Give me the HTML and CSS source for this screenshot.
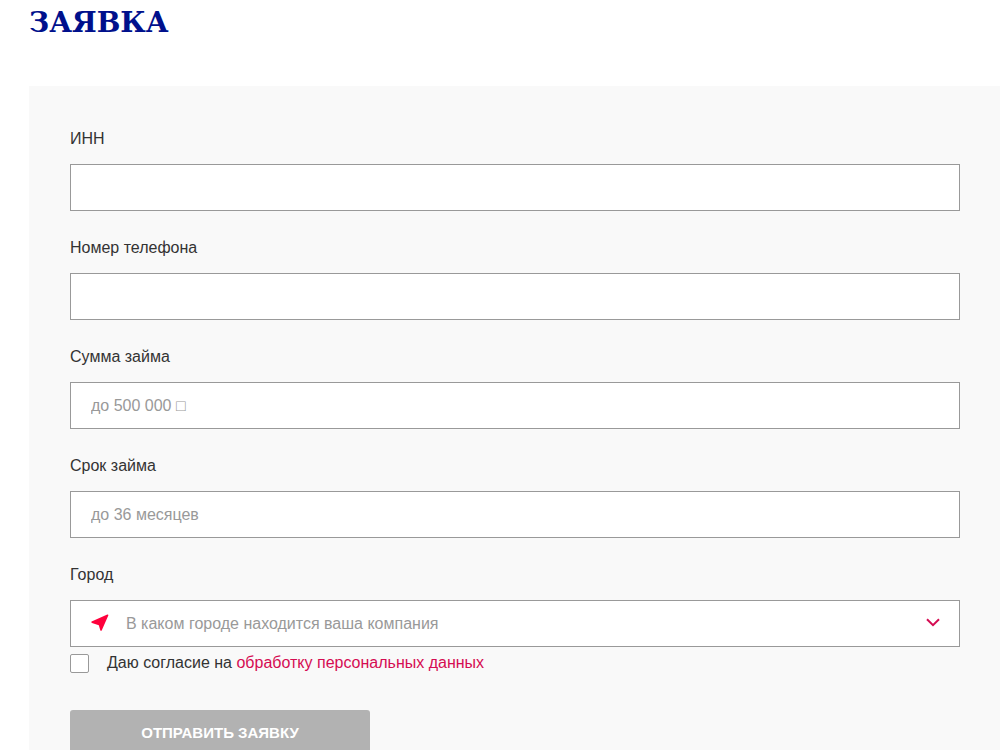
FILE: index.html
```html
<!DOCTYPE html>
<html lang="ru">
<head>
<meta charset="utf-8">
<meta name="viewport" content="width=device-width, initial-scale=1">
<title>Заявка</title>
<link rel="stylesheet" href="styles.css">
</head>
<body>
<main class="page">
  <h1 class="title">ЗАЯВКА</h1>
  <form class="form">
    <div class="field">
      <label class="label" for="inn">ИНН</label>
      <input class="control" id="inn" type="text">
    </div>
    <div class="field">
      <label class="label" for="phone">Номер телефона</label>
      <input class="control" id="phone" type="tel">
    </div>
    <div class="field">
      <label class="label" for="amount">Сумма займа</label>
      <input class="control" id="amount" type="text" placeholder="до 500 000 □">
    </div>
    <div class="field">
      <label class="label" for="term">Срок займа</label>
      <input class="control" id="term" type="text" placeholder="до 36 месяцев">
    </div>
    <div class="field">
      <label class="label" for="city">Город</label>
      <div class="select">
        <svg class="pin" viewBox="0 0 18 18" aria-hidden="true"><path d="M.6 7.400 16.300.5Q17.600.3 17.300 1.500L10.800 16.200Q10 17.600 9.300 16.200L7.800 11.300 1 9Q-.2 8.200.6 7.400Z"/></svg>
        <select class="control control-city" id="city">
          <option>В каком городе находится ваша компания</option>
        </select>
        <svg class="chevron" viewBox="0 0 14 9" aria-hidden="true"><path d="M1 1.200 7 7.200 13 1.200"/></svg>
      </div>
    </div>
    <div class="consent">
      <input class="check" id="agree" type="checkbox">
      <label for="agree">Даю согласие на <a class="link" href="#">обработку персональных данных</a></label>
    </div>
    <button class="submit" type="submit">ОТПРАВИТЬ ЗАЯВКУ</button>
  </form>
</main>
</body>
</html>
```
FILE: styles.css
```css
* {
  box-sizing: border-box;
}

body {
  margin: 0;
  background: #fff;
  color: #333;
  font: 16px/20px "Liberation Sans", Arial, sans-serif;
}

.page {
  padding-left: 29px;
}

.title {
  margin: 0 0 40px;
  color: #00108c;
  font: bold 28px/46px "DejaVu Serif", serif;
}

.form {
  padding: 43px 40px 40px 41px;
  background: #f9f9f9;
}

.field {
  display: flex;
  flex-direction: column;
  gap: 15px;
  margin-bottom: 27px;
}

.field:has(.select) {
  margin-bottom: 6px;
}

.control {
  width: 100%;
  height: 47px;
  padding: 1px 20px 0;
  border: 1px solid #999;
  border-radius: 0;
  background: #fff;
  color: #333;
  font: inherit;
}

.control::placeholder {
  color: #999;
  opacity: 1;
}

.select {
  display: grid;
  align-items: center;
}

.select > * {
  grid-area: 1 / 1;
}

.control-city {
  appearance: none;
  padding-left: 55px;
  color: #999;
}

.pin,
.chevron {
  z-index: 1;
  margin-bottom: 2px;
  pointer-events: none;
}

.pin {
  width: 18px;
  height: 18px;
  margin-left: 21px;
  fill: #ff003c;
}

.chevron {
  justify-self: end;
  width: 14px;
  height: 9px;
  margin-right: 20px;
  fill: none;
  stroke: #d50c52;
  stroke-width: 2;
}

.consent {
  display: flex;
  align-items: center;
  gap: 18px;
  margin-bottom: 37px;
}

.check {
  appearance: none;
  width: 19px;
  height: 19px;
  margin: 0;
  border: 1px solid #999;
  border-radius: 2px;
  background: #fff;
}

.check:checked {
  background: #d50c52;
}

.link {
  color: #d50c52;
  text-decoration: none;
}

.submit {
  width: 300px;
  height: 45px;
  padding: 0;
  border: 0;
  border-radius: 3px;
  background: #b2b2b2;
  color: #fff;
  font: bold 15px/20px "Liberation Sans", Arial, sans-serif;
}
```
